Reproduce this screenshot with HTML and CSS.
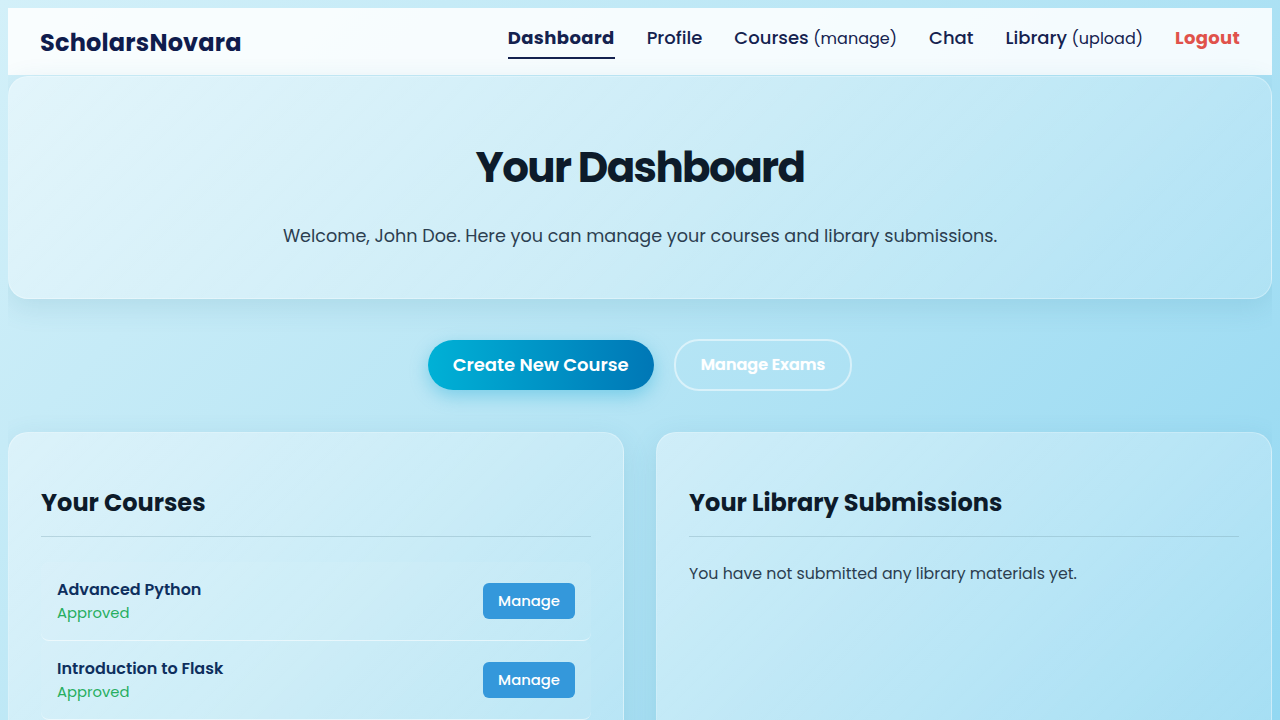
FILE: index.html
```html
<!DOCTYPE html>
<html lang="en">
<head>
<meta charset="utf-8">
<title>ScholarsNovara — Dashboard</title>
<link rel="stylesheet" href="styles.css">
</head>
<body>
<nav class="navbar">
  <a class="brand" href="#">ScholarsNovara</a>
  <ul class="nav-links">
    <li><a class="nav-link active" href="#">Dashboard</a></li>
    <li><a class="nav-link" href="#">Profile</a></li>
    <li><a class="nav-link" href="#">Courses <span class="nav-sub">(manage)</span></a></li>
    <li><a class="nav-link" href="#">Chat</a></li>
    <li><a class="nav-link" href="#">Library <span class="nav-sub">(upload)</span></a></li>
    <li><a class="nav-link logout" href="#">Logout</a></li>
  </ul>
</nav>

<header class="hero glass">
  <h1 class="hero-title">Your Dashboard</h1>
  <p class="hero-sub">Welcome, John Doe. Here you can manage your courses and library submissions.</p>
</header>

<div class="actions">
  <a class="btn btn-primary" href="#">Create New Course</a>
  <a class="btn btn-outline" href="#">Manage Exams</a>
</div>

<main class="grid">
  <section class="card glass">
    <h2 class="card-title">Your Courses</h2>
    <ul class="course-list">
      <li class="course-item">
        <div class="course-info">
          <span class="course-name">Advanced Python</span>
          <span class="course-status">Approved</span>
        </div>
        <a class="btn-manage" href="#">Manage</a>
      </li>
      <li class="course-item">
        <div class="course-info">
          <span class="course-name">Introduction to Flask</span>
          <span class="course-status">Approved</span>
        </div>
        <a class="btn-manage" href="#">Manage</a>
      </li>
    </ul>
  </section>
  <section class="card glass">
    <h2 class="card-title">Your Library Submissions</h2>
    <p class="empty">You have not submitted any library materials yet.</p>
  </section>
</main>
</body>
</html>
```

FILE: styles.css
```css
* { box-sizing: border-box; }

html, body { height: 100%; }

body {
  margin: 8px;
  font-family: "Poppins", "Open Sans", sans-serif;
  color: #2c3e50;
  background: linear-gradient(135deg, #d3f0f9 0%, #b9e6f5 45%, #93d8f2 100%);
  background-attachment: fixed;
  min-height: 100vh;
}

a { text-decoration: none; }

.navbar {
  display: flex;
  align-items: center;
  justify-content: space-between;
  height: 67px;
  padding: 0 32px;
  background: rgba(255, 255, 255, 0.86);
}

.brand {
  font-size: 24px;
  font-weight: 700;
  color: #0f1c4d;
  letter-spacing: 0.2px;
  padding-top: 2px;
}

.nav-links {
  display: flex;
  align-items: center;
  gap: 32px;
  list-style: none;
  margin: 0;
  padding: 0;
}

.nav-link {
  display: block;
  font-size: 18px;
  font-weight: 500;
  color: #14224f;
  padding: 5px 0 6px;
  border-bottom: 2px solid transparent;
  margin-top: -6px;
}

.nav-link.active {
  font-weight: 700;
  letter-spacing: 0.4px;
  border-bottom-color: #14224f;
}

.nav-sub {
  font-size: 16px;
  font-weight: 400;
}

.nav-link.logout { color: #e0524b; font-weight: 700; letter-spacing: 0.3px; }

.glass {
  background: linear-gradient(135deg, rgba(255, 255, 255, 0.38), rgba(255, 255, 255, 0.15));
  border: 1px solid rgba(255, 255, 255, 0.3);
  border-radius: 20px;
  box-shadow: 0 8px 28px rgba(40, 120, 150, 0.14);
}

.hero {
  margin-top: 1px;
  padding: 66px 24px 47px;
  text-align: center;
}

.hero-title {
  margin: 0;
  font-size: 42px;
  line-height: 1.2;
  font-weight: 700;
  color: #0d1b2a;
  letter-spacing: -1.6px;
}

.hero-sub {
  margin: 29px 0 0;
  font-size: 17.6px;
  line-height: 1.6;
  color: #2c3e50;
}

.actions {
  display: flex;
  justify-content: center;
  gap: 20px;
  margin: 41px 0 42px;
}

.btn {
  display: inline-flex;
  align-items: center;
  justify-content: center;
  height: 50px;
  padding: 0 25px;
  border-radius: 25px;
  font-size: 18px;
  font-weight: 600;
  color: #ffffff;
}

.btn-primary {
  background: linear-gradient(90deg, #00b1d6, #0077b6);
  box-shadow: 0 6px 18px rgba(0, 160, 210, 0.35);
}

.btn-outline {
  height: 52px;
  margin-top: -1px;
  margin-bottom: -1px;
  border: 2px solid rgba(255, 255, 255, 0.5);
  font-size: 16px;
  text-shadow: 0 0 1px rgba(255, 255, 255, 0.6);
}

.grid {
  display: grid;
  grid-template-columns: 1fr 1fr;
  gap: 32px;
}

.card {
  min-height: 420px;
  padding: 32px;
}

.card-title {
  margin: 24px 0 0;
  padding-bottom: 19px;
  border-bottom: 1px solid rgba(120, 160, 175, 0.35);
  font-size: 24px;
  line-height: 1.2;
  font-weight: 700;
  color: #0d1b2a;
}

.course-list {
  list-style: none;
  margin: 25px 0 0;
  padding: 0;
}

.course-item {
  display: flex;
  align-items: center;
  justify-content: space-between;
  padding: 17px 16px;
  border-radius: 8px;
  border-bottom: 1px solid rgba(255, 255, 255, 0.55);
  background: rgba(255, 255, 255, 0.06);
}

.course-info {
  display: flex;
  flex-direction: column;
}

.course-name {
  font-size: 16px;
  line-height: 1.4;
  font-weight: 600;
  color: #0e2f5e;
}

.course-status {
  font-size: 14.8px;
  line-height: 1.45;
  color: #27ae60;
}

.btn-manage {
  display: inline-flex;
  align-items: center;
  height: 36px;
  padding: 0 15px;
  border-radius: 6px;
  background: #3498db;
  color: #ffffff;
  font-size: 14.8px;
  font-weight: 500;
}

.empty {
  margin: 24px 0 0;
  font-size: 15.8px;
  line-height: 1.6;
  color: #2c3e50;
}
```
